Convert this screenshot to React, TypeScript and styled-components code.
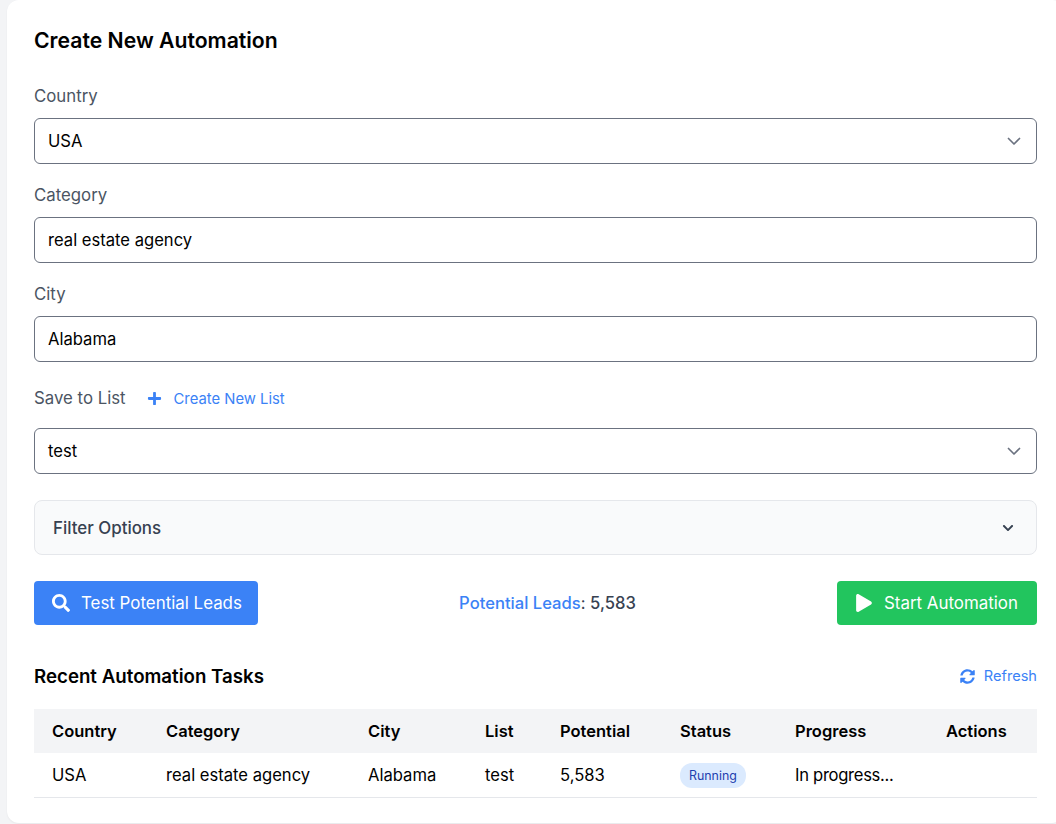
import styled, { createGlobalStyle } from 'styled-components';
import { FaChevronDown, FaPlay, FaPlus, FaSearch, FaSyncAlt } from 'react-icons/fa';

const COLUMNS = [
  { title: 'Country', width: 114 },
  { title: 'Category', width: 202 },
  { title: 'City', width: 117 },
  { title: 'List', width: 75 },
  { title: 'Potential', width: 120 },
  { title: 'Status', width: 115 },
  { title: 'Progress', width: 151 },
  { title: 'Actions', width: 109 },
];

const SelectArrow = () => (
  <ArrowIcon viewBox="0 0 20 20" fill="none">
    <path d="M4.5 7.5 10 13l5.5-5.5" stroke="#6b7280" strokeWidth="1.7" strokeLinecap="round" strokeLinejoin="round" />
  </ArrowIcon>
);

const App = () => {
  return (
    <>
      <GlobalStyle />
      <Card>
        <Title>Create New Automation</Title>

        <Label>Country</Label>
        <FieldBox>
          USA
          <SelectArrow />
        </FieldBox>

        <Label>Category</Label>
        <FieldBox>real estate agency</FieldBox>

        <Label>City</Label>
        <FieldBox>Alabama</FieldBox>

        <ListLabelRow>
          <InlineLabel>Save to List</InlineLabel>
          <CreateListLink>
            <FaPlus size={15} />
            <span>Create New List</span>
          </CreateListLink>
        </ListLabelRow>
        <ListBox>
          test
          <SelectArrow />
        </ListBox>

        <FilterBar>
          Filter Options
          <FaChevronDown size={12} color="#374151" />
        </FilterBar>

        <ActionRow>
          <ActionButton $color="#3b82f6" $width={224}>
            <FaSearch size={18} />
            Test Potential Leads
          </ActionButton>
          <LeadCount>
            <strong>Potential Leads</strong>: <b>5,583</b>
          </LeadCount>
          <ActionButton $color="#22c55e" $width={200}>
            <FaPlay size={18} />
            Start Automation
          </ActionButton>
        </ActionRow>

        <TasksHeader>
          <TasksTitle>Recent Automation Tasks</TasksTitle>
          <RefreshLink>
            <FaSyncAlt size={15} />
            Refresh
          </RefreshLink>
        </TasksHeader>

        <Table>
          <colgroup>
            {COLUMNS.map((column) => (
              <col key={column.title} width={column.width} />
            ))}
          </colgroup>
          <thead>
            <tr>
              {COLUMNS.map((column) => (
                <HeadCell key={column.title}>{column.title}</HeadCell>
              ))}
            </tr>
          </thead>
          <tbody>
            <tr>
              <Cell>USA</Cell>
              <Cell>real estate agency</Cell>
              <Cell>Alabama</Cell>
              <Cell>test</Cell>
              <Cell>5,583</Cell>
              <Cell>
                <StatusBadge>Running</StatusBadge>
              </Cell>
              <ProgressCell>In progress...</ProgressCell>
              <Cell />
            </tr>
          </tbody>
        </Table>
      </Card>
    </>
  );
};

export default App;

const GlobalStyle = createGlobalStyle`
  html, body {
    margin: 0;
    height: 824px;
    overflow: hidden;
    background-color: #f3f4f6;
  }
  body {
    font-family: Inter, "Noto Sans", sans-serif;
    color: #000;
  }
`;

const Card = styled.div`
  box-sizing: border-box;
  width: 1057px;
  height: 823px;
  margin-left: 7px;
  padding: 24px 27px 0;
  background-color: #fff;
  border-radius: 12px;
  box-shadow: 0 1px 2px rgba(0, 0, 0, 0.05);
`;

const Title = styled.h2`
  margin: 0 0 27px;
  font-size: 21.2px;
  line-height: 33px;
  font-weight: 600;
  color: #000;
`;

const Label = styled.div`
  height: 24px;
  margin-bottom: 10px;
  font-size: 16.8px;
  line-height: 25px;
  color: #4b5563;
`;

const FieldBox = styled.div`
  box-sizing: border-box;
  display: flex;
  align-items: center;
  justify-content: space-between;
  width: 1003px;
  height: 46px;
  margin-bottom: 19px;
  padding: 0 13px;
  border: 1px solid #6b7280;
  border-radius: 6px;
  font-size: 16.6px;
`;

const ArrowIcon = styled.svg`
  width: 20px;
  height: 20px;
  margin-right: -1px;
`;

const ListLabelRow = styled.div`
  display: flex;
  align-items: center;
  gap: 21px;
  height: 34px;
  margin-bottom: 13px;
`;

const InlineLabel = styled.span`
  font-size: 16.8px;
  color: #4b5563;
`;

const CreateListLink = styled.span`
  display: flex;
  align-items: center;
  gap: 12px;
  padding-top: 1px;
  font-size: 14.8px;
  color: #3b82f6;
`;

const ListBox = styled(FieldBox)`
  margin-bottom: 26px;
`;

const FilterBar = styled.div`
  box-sizing: border-box;
  display: flex;
  align-items: center;
  justify-content: space-between;
  width: 1003px;
  height: 55px;
  margin-bottom: 26px;
  padding: 0 22px 0 18px;
  background-color: #f9fafb;
  border: 1px solid #e5e7eb;
  border-radius: 8px;
  font-size: 16.9px;
  font-weight: 500;
  color: #374151;
`;

const ActionRow = styled.div`
  display: flex;
  align-items: center;
  justify-content: space-between;
  width: 1003px;
  height: 44px;
  margin-bottom: 34px;
`;

const ActionButton = styled.button<{ $color: string; $width: number }>`
  box-sizing: border-box;
  display: flex;
  align-items: center;
  gap: 11px;
  width: ${({ $width }) => $width}px;
  height: 44px;
  padding: 0 0 0 18px;
  border: none;
  border-radius: 4px;
  background-color: ${({ $color }) => $color};
  color: #fff;
  font-family: inherit;
  font-size: 16.9px;
  font-weight: 400;
  white-space: nowrap;

  svg {
    flex-shrink: 0;
  }
`;

const LeadCount = styled.div`
  font-size: 16.6px;
  color: #374151;

  strong,
  b {
    font-weight: 500;
  }

  strong {
    color: #3b82f6;
  }
`;

const TasksHeader = styled.div`
  display: flex;
  align-items: center;
  justify-content: space-between;
  width: 1003px;
  height: 34px;
  margin-bottom: 16px;
`;

const TasksTitle = styled.h3`
  margin: 0;
  font-size: 18.7px;
  font-weight: 600;
  color: #000;
`;

const RefreshLink = styled.span`
  display: flex;
  align-items: center;
  gap: 9px;
  font-size: 14.6px;
  color: #3b82f6;
`;

const Table = styled.table`
  width: 1003px;
  border-collapse: collapse;
  table-layout: fixed;
`;

const HeadCell = styled.th`
  height: 44px;
  padding: 0 0 0 18px;
  background-color: #f3f4f6;
  font-size: 16.5px;
  font-weight: 600;
  text-align: left;
  color: #000;
`;

const Cell = styled.td`
  height: 44px;
  padding: 0 0 0 18px;
  border-bottom: 1px solid #e5e7eb;
  font-size: 16.6px;
  color: #000;
`;

const ProgressCell = styled(Cell)`
  letter-spacing: -0.3px;
`;

const StatusBadge = styled.span`
  display: inline-block;
  padding: 0 9px;
  border-radius: 12px;
  background-color: #dbeafe;
  color: #1e40af;
  font-size: 12.4px;
  line-height: 25px;
`;
